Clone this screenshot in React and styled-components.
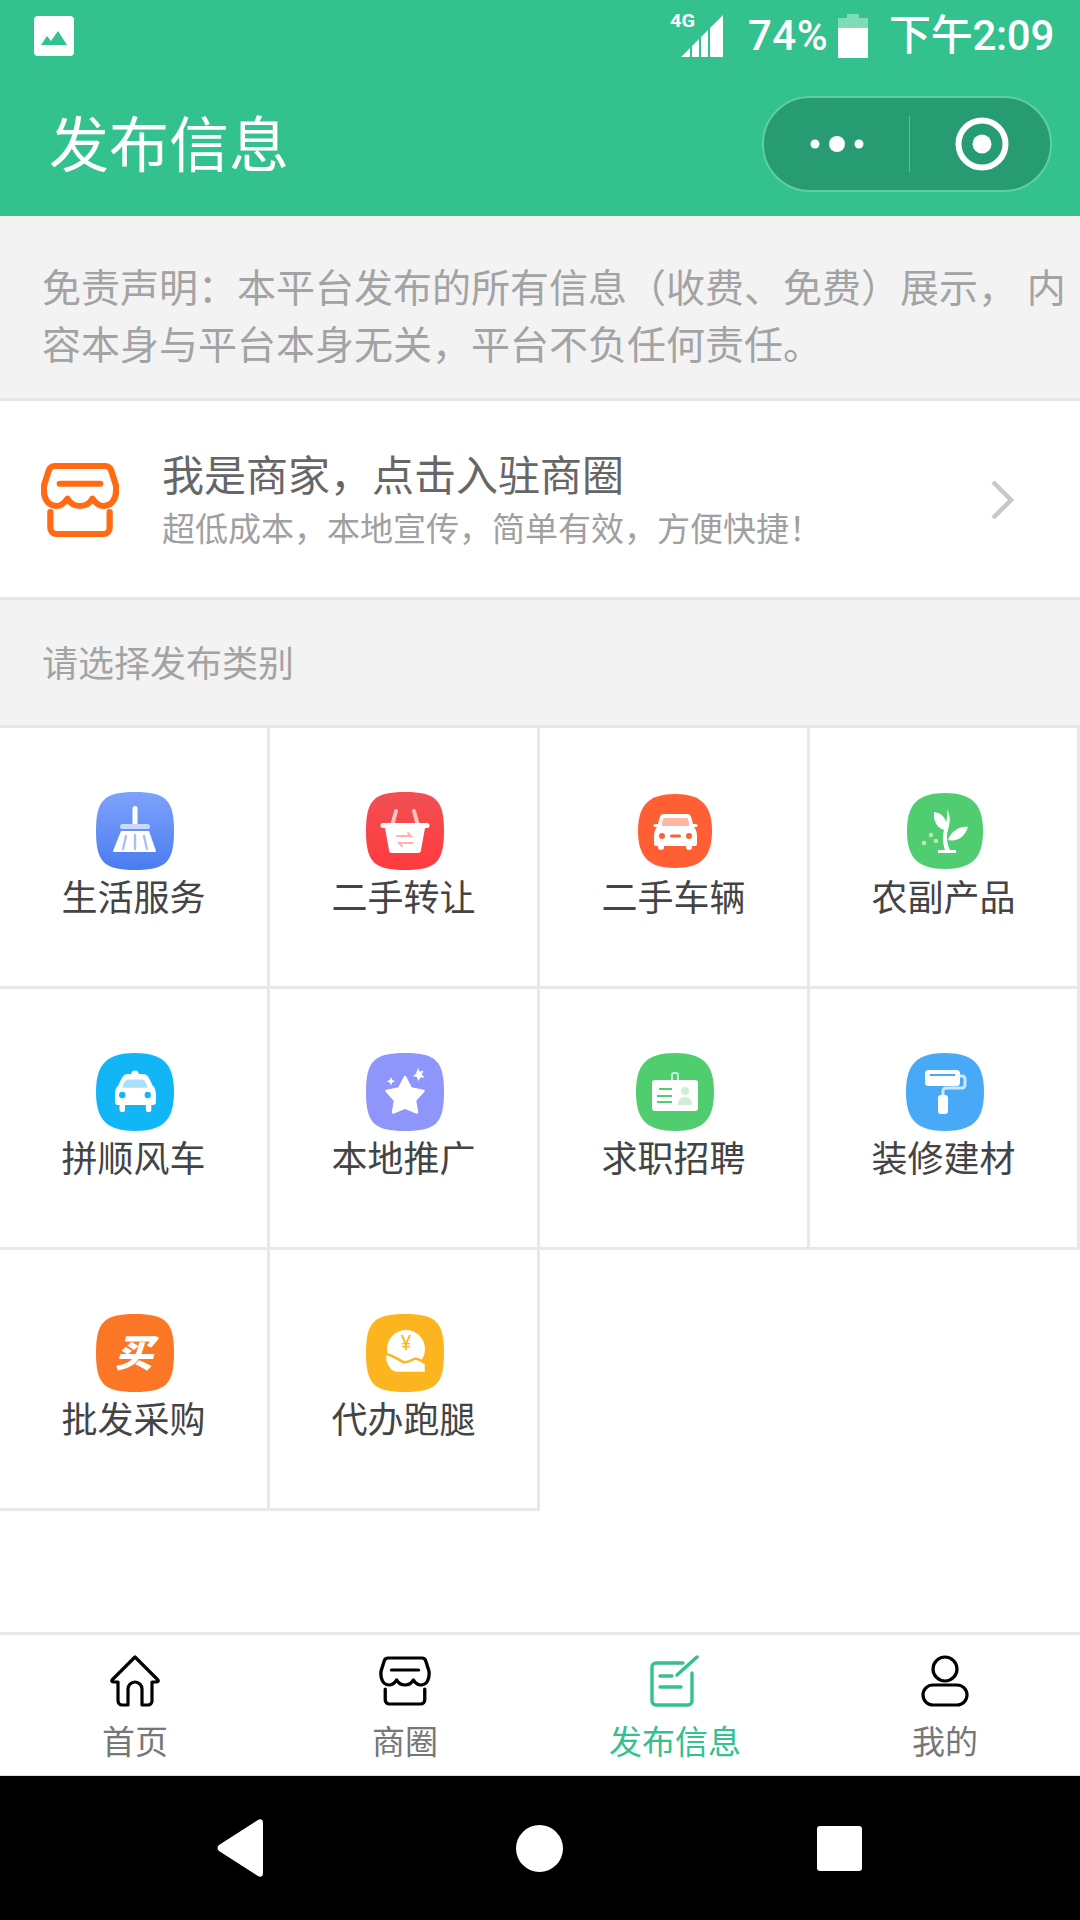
import React from 'react';
import styled, { createGlobalStyle } from 'styled-components';

const Global = createGlobalStyle`
  html, body { margin: 0; padding: 0; background: #fff; }
  * { box-sizing: border-box; }
`;

const CJK = `Roboto, "Noto Sans CJK SC", sans-serif`;
const GREEN = '#33c18e';

const Page = styled.div`
  width: 1080px; height: 1920px; display: flex; flex-direction: column;
  background: #fff; font-family: ${CJK}; overflow: hidden;
`;
const Header = styled.header`
  height: 216px; background: ${GREEN}; color: #fff; display: flex; flex-direction: column; flex: none;
`;
const StatusBar = styled.div`
  height: 72px; display: flex; align-items: center; padding: 0 26px 0 34px;
`;
const StatusRight = styled.div`
  margin-left: auto; display: flex; align-items: center;
`;
const Percent = styled.span`
  font: 500 42px/72px Roboto, sans-serif; margin-left: 22px; letter-spacing: 0.5px;
`;
const Clock = styled.span`
  font-size: 42px; line-height: 72px; font-weight: 500; margin-left: 21px; white-space: nowrap; letter-spacing: -0.3px;
  font-family: Roboto, "Noto Sans CJK SC", sans-serif;
`;
const Battery = styled.svg`
  margin-left: 10px;
`;
const NavRow = styled.div`
  flex: 1; display: flex; align-items: flex-start; padding: 24px 28px 0 49px;
`;
const Title = styled.h1`
  margin: 0; font-size: 60px; line-height: 102px; font-weight: 400;
`;
const Capsule = styled.div`
  margin-left: auto; width: 290px; height: 96px; border-radius: 48px; background: #279b72;
  border: 2px solid #5fcea7; display: flex; align-items: center;
`;
const MenuPart = styled.div`
  width: 145px; height: 100%; display: flex; align-items: center; justify-content: center;
`;
const ClosePart = styled.div`
  flex: 1; height: 100%; display: flex; align-items: center; justify-content: center; padding-left: 4px;
`;
const CapsuleDivider = styled.div`
  width: 1px; height: 56px; background: #5cc09b;
`;
const Notice = styled.section`
  height: 185px; background: #f3f3f3; border-bottom: 3px solid #e6e6e6; flex: none;
  padding: 45px 10px 0 42px; font-size: 39px; line-height: 57px; color: #a3a3a3;
`;
const Merchant = styled.section`
  height: 199px; flex: none; border-bottom: 3px solid #e6e6e6; display: flex; align-items: center;
  padding: 2px 66px 0 41px;
`;
const MerchantText = styled.div`
  margin: 8px 0 0 43px; flex: 1; display: flex; flex-direction: column;
`;
const MerchantTitle = styled.div`
  font-size: 42px; line-height: 52px; color: #666;
`;
const MerchantSub = styled.div`
  font-size: 33px; line-height: 54px; color: #a0a0a0;
`;
const SectionLabel = styled.div`
  height: 128px; flex: none; background: #f3f3f3; border-bottom: 3px solid #e6e6e6;
  padding: 39px 0 0 42px; font-size: 36px; line-height: 52px; color: #a3a3a3;
`;
const Grid = styled.div`
  display: grid; grid-template-columns: repeat(4, 270px); grid-auto-rows: 261px; flex: none;
`;
const Cell = styled.div`
  border-right: 3px solid #e8e8e8; border-bottom: 3px solid #e8e8e8; display: flex; flex-direction: column;
  align-items: center; padding-top: 64px;
`;
const CellIcon = styled.div`
  width: 78px; height: 78px; margin-left: 3px; display: block;
`;
const CellLabel = styled.div`
  font-size: 36px; line-height: 56px; color: #444; margin-top: 1px; white-space: nowrap;
`;
const Spacer = styled.div`flex: 1;`;
const TabBar = styled.nav`
  height: 144px; flex: none; border-top: 3px solid #e8e8e8; display: grid; grid-template-columns: repeat(4, 270px);
  border-bottom: 1px solid #ddd;
`;
const Tab = styled.div`
  display: flex; flex-direction: column; align-items: center; padding-top: 20px;
  color: ${p => (p.$active ? GREEN : '#777')};
`;
const TabLabel = styled.div`
  font-size: 33px; line-height: 44px; margin-top: 14px; white-space: nowrap;
`;
const SystemBar = styled.div`
  height: 144px; flex: none; background: #000; display: grid; grid-template-columns: 217px 46px 253px 47px 254px 45px;
  align-items: center;
`;

const Squircle = ({ fill, id, to, inset = 0, round }) => {
  const s = inset, e = 78 - inset, m = 39;
  const k = round ? 11 : 8;
  const d = `M${m} ${s}C${e - k} ${s} ${e} ${s + k} ${e} ${m}C${e} ${e - k} ${e - k} ${e} ${m} ${e}C${s + k} ${e} ${s} ${e - k} ${s} ${m}C${s} ${s + k} ${s + k} ${s} ${m} ${s}Z`;
  return (
    <>
      {to && (
        <defs>
          <linearGradient id={id} x1="0" y1="0" x2="0" y2="1">
            <stop offset="0" stopColor={fill} />
            <stop offset="1" stopColor={to} />
          </linearGradient>
        </defs>
      )}
      <path d={d} fill={to ? `url(#${id})` : fill} />
    </>
  );
};

const AppIcon = ({ children, ...rest }) => (
  <CellIcon>
    <svg width="78" height="78" viewBox="0 0 78 78">
      <Squircle {...rest} />
      {children}
    </svg>
  </CellIcon>
);

const icons = {
  broom: (
    <AppIcon fill="#7ea3fb" to="#4a7cf0" id="gb">
      <rect x="36.5" y="14" width="5" height="20" rx="2.5" fill="#fff" />
      <rect x="24" y="32" width="30" height="5" rx="2.5" fill="#c9d8fd" />
      <path d="M25 39H53L60 59a1 1 0 0 1-1 1H18a1 1 0 0 1-1-1Z" fill="#fff" />
      <path d="M30 44l-3 13M39 43v14M48 44l3 13" stroke="#a9c1fa" strokeWidth="2.4" strokeLinecap="round" fill="none" />
    </AppIcon>
  ),
  basket: (
    <AppIcon fill="#f15053" to="#ff3a3d" id="gr">
      <path d="M30 19l-3.500 13M48 19l3.500 13" stroke="#ffc4c4" strokeWidth="4" strokeLinecap="round" fill="none" />
      <rect x="14.500" y="31" width="49" height="5" rx="2.500" fill="#fff" />
      <path d="M19 36H59L55 58a3 3 0 0 1-3 3H26a3 3 0 0 1-3-3Z" fill="#fff" />
      <path d="M31 44H45L42 41M47 51H33L36 54" stroke="#ffb1b1" strokeWidth="1.8" fill="none" strokeLinecap="round" />
    </AppIcon>
  ),
  car: (
    <AppIcon fill="#ff5f33" inset={2} round>
      <path d="M27 22H51C54 22 55 24 56 28L57 32H60a1.500 1.500 0 0 1 0 3H58C60 38 61 40 61 44V52a2 2 0 0 1-2 2H56V55a3 3 0 0 1-6 0V54H28V55a3 3 0 0 1-6 0V54H20a2 2 0 0 1-2-2V44C18 40 19 38 21 35H19a1.500 1.500 0 0 1 0-3H22L23 28C24 24 25 22 27 22Z" fill="#fff" />
      <path d="M28 26H51C52 26 54 33 53 34H26C25 33 27 26 28 26Z" fill="#ffb6a2" />
      <circle cx="26" cy="44" r="3" fill="#ff5f33" />
      <circle cx="53" cy="44" r="3" fill="#ff5f33" />
      <rect x="34" y="42.500" width="11" height="3" rx="1.500" fill="#ff5f33" />
    </AppIcon>
  ),
  plant: (
    <AppIcon fill="#50cd70" inset={1} round>
      <path d="M41 17C45 24 44 31 42 38C40 44 41 52 44 58H50V61H32V58H39C37 52 36 45 38 38C40 32 42 24 41 17Z" fill="#fff" />
      <path d="M28 20C37 21 42 28 40 38C33 38 27 31 28 20Z" fill="#fff" />
      <path d="M62 35C56 34 46 37 42 48C52 50 59 44 62 35Z" fill="#fff" />
      <circle cx="25" cy="43" r="2.200" fill="#b9ecc6" />
      <circle cx="18" cy="51" r="2.200" fill="#b9ecc6" />
      <circle cx="30" cy="49" r="2.200" fill="#b9ecc6" />
    </AppIcon>
  ),
  taxi: (
    <AppIcon fill="#12b6f6" round>
      <g transform="translate(3.500 2) scale(0.91)">
        <path d="M35 21a4 4 0 0 1 8 0H48C53 21 55 26 58 33C61 36 62 39 62 44V52a3 3 0 0 1-3 3H57V60a3 3 0 0 1-6 0V55H28V60a3 3 0 0 1-6 0V55H20a3 3 0 0 1-3-3V44C17 39 18 36 21 33C24 26 26 21 31 21Z" fill="#fff" />
        <path d="M30 27H48C50 28 52 32 53 36H25C26 32 28 28 30 27Z" fill="#a6e2fb" />
        <circle cx="25" cy="44" r="3.500" fill="#12b6f6" />
        <circle cx="53" cy="44" r="3.500" fill="#12b6f6" />
      </g>
    </AppIcon>
  ),
  star: (
    <AppIcon fill="#8f96fb">
      <path d="M39 24L45 35.500L57.500 38L49 47.500L51 59.500L39 54.500L27 59.500L29 47.500L20.500 38L33 35.500Z" fill="#fff" stroke="#fff" strokeWidth="2.500" strokeLinejoin="round" />
      <path d="M52 15l1.500 3.500 4-.8-1.800 3.700 2.800 3-4.200.2-1.900 3.500-1.500-4-4-.9 3.200-2.600Z" fill="#fff" />
      <path d="M25 24l1.200 3 3 1.200-3 1.200-1.200 3-1.200-3-3-1.200 3-1.200Z" fill="#fff" />
    </AppIcon>
  ),
  card: (
    <AppIcon fill="#4fcd6f" round>
      <rect x="36" y="20" width="6" height="9" rx="2" fill="none" stroke="#c6eed1" strokeWidth="2" />
      <rect x="16" y="27" width="46" height="31" rx="3" fill="#fff" />
      <path d="M23 36h13M21 43h15M21 49h15" stroke="#4fcd6f" strokeWidth="2.200" />
      <circle cx="49" cy="38" r="4" fill="#cdeed7" />
      <path d="M42 52c0-5 3-8 7-8s7 3 7 8Z" fill="#cdeed7" />
    </AppIcon>
  ),
  roller: (
    <AppIcon fill="#48a9f7" round>
      <rect x="19" y="17" width="35" height="16" rx="3.500" fill="#fff" />
      <path d="M24 22H49" stroke="#48a9f7" strokeWidth="2" />
      <path d="M54 23h2a3 3 0 0 1 3 3v6a3 3 0 0 1-3 3H40a3 3 0 0 0-3 3v5" stroke="#d0e8fc" strokeWidth="3" fill="none" />
      <rect x="32" y="42" width="10" height="19" rx="3" fill="#fff" />
    </AppIcon>
  ),
  buy: (
    <AppIcon fill="#fb7726">
      <text x="38" y="53" textAnchor="middle" fontSize="38" fontWeight="900" fontStyle="italic" fill="#fff" fontFamily="'Noto Sans CJK SC', sans-serif">买</text>
    </AppIcon>
  ),
  money: (
    <AppIcon fill="#fdb51f">
      <circle cx="40" cy="35" r="19" fill="#fff" />
      <path d="M19 40C25 40 33 46 37 48C41 49 44 47 48 45C52 44 56 47 60 50V59H31C24 59 18 50 19 40Z" fill="#fff" stroke="#fdb51f" strokeWidth="2.500" />
      <text x="40" y="36" textAnchor="middle" fontSize="20" fill="#fdb51f" fontFamily="Roboto, sans-serif">¥</text>
    </AppIcon>
  ),
};

const StoreIcon = ({ w, h, color, sw, vb = '0 0 50 50' }) => (
  <svg width={w} height={h} viewBox={vb} preserveAspectRatio="none" fill="none" stroke={color} strokeWidth={sw} strokeLinecap="round" strokeLinejoin="round">
    <path d="M9 2H41a4 4 0 0 1 4 3L48 15C49 23 46 29 40 29C37 29 35 27 33 24C31 28 28 29 25 29S19 28 17 24C15 27 13 29 10 29C4 29 1 23 2 15L5 5A4 4 0 0 1 9 2Z" />
    <path d="M12 14H38" />
    <path d="M6 33V44A4 4 0 0 0 10 48H40A4 4 0 0 0 44 44V33" />
  </svg>
);

const TabIcons = [
  <svg key="h" width="50" height="52" viewBox="0 0 50 52" fill="none" stroke="#000" strokeWidth="3.200" strokeLinejoin="round">
    <path d="M25 2L2.500 24.500C1 26 2 27 4 27H8V46A4 4 0 0 0 12 50H18V34A7 7 0 0 1 32 34V50H38A4 4 0 0 0 42 46V27H46C48 27 49 26 47.500 24.500Z" />
  </svg>,
  <StoreIcon key="s" w={52} h={52} color="#000" sw={3.2} vb="0 -1 50 52" />,
  <svg key="e" width="50" height="52" viewBox="0 0 50 52" fill="none" stroke={GREEN} strokeWidth="3.400" strokeLinecap="round" strokeLinejoin="round">
    <path d="M33 8H6A4 4 0 0 0 2 12V46A4 4 0 0 0 6 50H38A4 4 0 0 0 42 46V18" />
    <path d="M27 20L47 2" />
    <path d="M10 21H22M10 32H31" />
  </svg>,
  <svg key="u" width="48" height="52" viewBox="0 0 48 52" fill="none" stroke="#000" strokeWidth="3.200">
    <circle cx="24" cy="14" r="12" />
    <rect x="2" y="30" width="44" height="20" rx="10" />
  </svg>,
];

const cells = [
  ['生活服务', 'broom'], ['二手转让', 'basket'], ['二手车辆', 'car'], ['农副产品', 'plant'],
  ['拼顺风车', 'taxi'], ['本地推广', 'star'], ['求职招聘', 'card'], ['装修建材', 'roller'],
  ['批发采购', 'buy'], ['代办跑腿', 'money'],
];
const tabs = ['首页', '商圈', '发布信息', '我的'];

export default function App() {
  return (
    <Page>
      <Global />
      <Header>
        <StatusBar>
          <svg width="40" height="40" viewBox="0 0 40 40">
            <path d="M4 0H36A4 4 0 0 1 40 4V36A4 4 0 0 1 36 40H4A4 4 0 0 1 0 36V4A4 4 0 0 1 4 0Z" fill="#fff" />
            <path d="M7 29L13 20L17 25L24 15L33 29Z" fill={GREEN} />
          </svg>
          <StatusRight>
            <svg width="56" height="60" viewBox="0 -6 56 60">
              <text x="0" y="15" fontSize="19" fontWeight="700" fill="#fff" fontFamily="Roboto, sans-serif" textLength="25" lengthAdjust="spacingAndGlyphs">4G</text>
              <path d="M11 45L20 36V45ZM22 34L29 27V45H22ZM31 25L38 18V45H31ZM40 16L53 3V45H40Z" fill="#fff" />
            </svg>
            <Percent>74%</Percent>
            <Battery width="30" height="44" viewBox="0 0 30 44">
              <path d="M9 0H21V4H30V14H0V4H9Z" fill="#7fdcb9" />
              <rect x="0" y="14" width="30" height="30" fill="#fff" />
            </Battery>
            <Clock>下午2:09</Clock>
          </StatusRight>
        </StatusBar>
        <NavRow>
          <Title>发布信息</Title>
          <Capsule>
            <MenuPart>
              <svg width="56" height="24" viewBox="0 0 56 24" fill="#fff">
                <circle cx="6" cy="12" r="4.500" />
                <circle cx="28" cy="12" r="8" />
                <circle cx="50" cy="12" r="4.500" />
              </svg>
            </MenuPart>
            <CapsuleDivider />
            <ClosePart>
              <svg width="54" height="54" viewBox="0 0 54 54">
                <circle cx="27" cy="27" r="23.500" fill="none" stroke="#fff" strokeWidth="6" />
                <circle cx="27" cy="27" r="9.500" fill="#fff" />
              </svg>
            </ClosePart>
          </Capsule>
        </NavRow>
      </Header>
      <Notice>免责声明：本平台发布的所有信息（收费、免费）展示， 内容本身与平台本身无关，平台不负任何责任。</Notice>
      <Merchant>
        <StoreIcon w={78} h={74} color="#ff6a13" sw={4} />
        <MerchantText>
          <MerchantTitle>我是商家，点击入驻商圈</MerchantTitle>
          <MerchantSub>超低成本，本地宣传，简单有效，方便快捷！</MerchantSub>
        </MerchantText>
        <svg width="24" height="40" viewBox="0 0 24 40" fill="none" stroke="#c8c8c8" strokeWidth="4.500">
          <path d="M3 2L21 20L3 38" />
        </svg>
      </Merchant>
      <SectionLabel>请选择发布类别</SectionLabel>
      <Grid>
        {cells.map(([label, icon]) => (
          <Cell key={label}>
            {icons[icon]}
            <CellLabel>{label}</CellLabel>
          </Cell>
        ))}
      </Grid>
      <Spacer />
      <TabBar>
        {tabs.map((t, i) => (
          <Tab key={t} $active={i === 2}>
            {TabIcons[i]}
            <TabLabel>{t}</TabLabel>
          </Tab>
        ))}
      </TabBar>
      <SystemBar>
        <span />
        <svg width="46" height="58" viewBox="0 0 46 58" fill="#fff">
          <path d="M41 1C44 -1 46 1 46 4V54C46 57 44 59 41 57L2 32C0 30 0 28 2 26Z" />
        </svg>
        <span />
        <svg width="47" height="47" viewBox="0 0 47 47" fill="#fff"><circle cx="23.500" cy="23.500" r="23.500" /></svg>
        <span />
        <svg width="45" height="45" viewBox="0 0 45 45" fill="#fff"><rect width="45" height="45" rx="3" /></svg>
      </SystemBar>
    </Page>
  );
}
